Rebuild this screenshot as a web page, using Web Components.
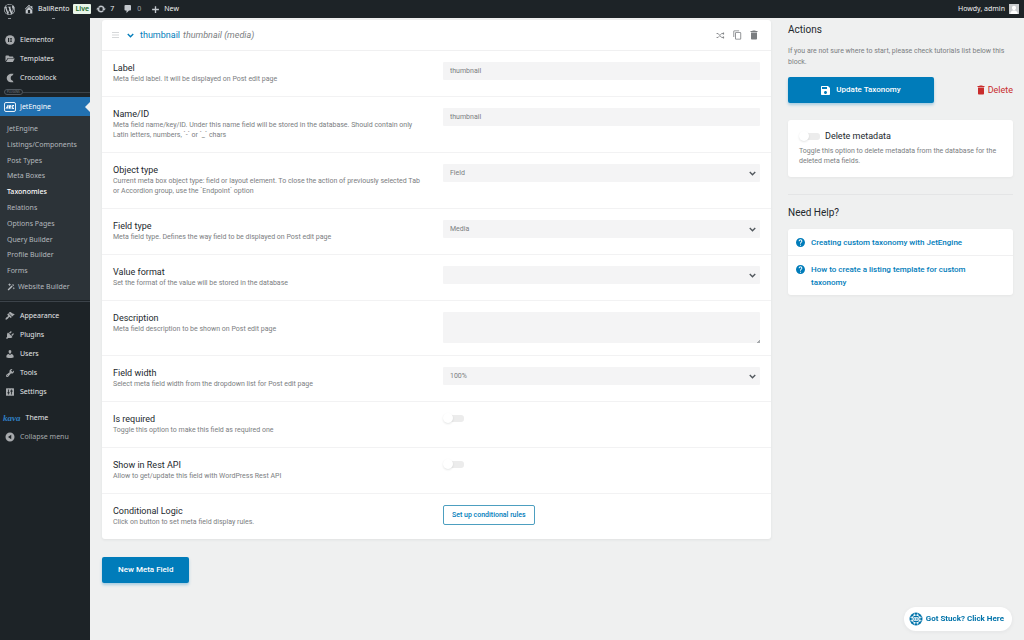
<!DOCTYPE html>
<html lang="en">
<head>
<meta charset="utf-8">
<title>Edit Taxonomy</title>
<style>
  body { margin: 0; background: #eff0f0; font-family: Roboto, "Liberation Sans", sans-serif; }
</style>
</head>
<body>
<taxonomy-page></taxonomy-page>
<script>
const ICONS = {
  wordpress: ['0 0 20 20', '<path d="M20 10c0-5.51-4.49-10-10-10C4.48 0 0 4.49 0 10c0 5.52 4.48 10 10 10 5.51 0 10-4.48 10-10zM7.78 15.37L4.37 6.22c.55-.02 1.17-.08 1.17-.08.5-.06.44-1.13-.06-1.11 0 0-1.45.11-2.37.11-.18 0-.37 0-.58-.01C4.12 2.69 6.87 1.11 10 1.11c2.33 0 4.45.87 6.05 2.34-.68-.11-1.65.39-1.65 1.58 0 .74.45 1.36.9 2.1.35.61.55 1.36.55 2.46 0 1.49-1.4 5-1.4 5l-3.03-8.37c.54-.02.82-.17.82-.17.5-.05.44-1.25-.06-1.22 0 0-1.44.12-2.38.12-.87 0-2.33-.12-2.33-.12-.5-.03-.56 1.2-.06 1.22l.92.08 1.26 3.41zM17.41 10c.24-.64.74-1.87.43-4.25.7 1.29 1.05 2.71 1.05 4.25 0 3.29-1.73 6.24-4.4 7.78.97-2.59 1.94-5.2 2.92-7.78zM6.1 18.09C3.12 16.65 1.11 13.53 1.11 10c0-1.3.23-2.48.72-3.59C3.25 10.3 4.67 14.2 6.1 18.09zm4.03-6.63l2.58 6.98c-.86.29-1.76.45-2.71.45-.79 0-1.57-.11-2.29-.33.81-2.38 1.62-4.74 2.42-7.1z"/>'],
  home: ['1 1 18 18', '<path d="M16 8.5l1.53 1.53-1.06 1.06L10 4.6l-6.47 6.49-1.06-1.06L10 2.5l4 4v-2h2v4zm-6-2.46l6 5.99V18H4v-5.97zM12 17v-5H8v5h4z"/>'],
  update: ['0 0 20 20', '<path stroke="currentColor" stroke-width=".5" d="M10.2 3.28c3.53 0 6.43 2.61 6.92 6h2.08l-3.5 4-3.5-4h2.32c-.45-1.97-2.21-3.45-4.32-3.45-1.45 0-2.73.71-3.54 1.78L4.95 5.66C6.23 4.2 8.11 3.28 10.2 3.28zm-.4 13.44c-3.52 0-6.43-2.61-6.92-6H.8l3.5-4c1.17 1.33 2.33 2.67 3.5 4H5.48c.45 1.97 2.21 3.45 4.32 3.45 1.45 0 2.73-.71 3.54-1.78l1.71 1.95c-1.28 1.46-3.15 2.38-5.25 2.38z"/>'],
  comment: ['1 0 18 20', '<path d="M5 2h9q.82 0 1.41.59T16 4v7q0 .82-.59 1.41T14 13h-2l-5 5v-5H5q-.82 0-1.41-.59T3 11V4q0-.82.59-1.41T5 2z"/>'],
  plus: ['0 0 20 20', '<path d="M8.5 2.500h3v6h6v3h-6v6h-3v-6h-6v-3h6z"/>'],
  elementor: ['0 0 20 20', '<circle cx="10" cy="10" r="9.6"/><path fill="#1d2327" d="M6 6h2v8H6zM9.4 6H14v1.700H9.400zM9.400 9.200H14v1.700H9.400zM9.400 12.300H14V14H9.400z"/>'],
  folder: ['0 0 20 20', '<path d="M1 4.5C1 3.7 1.5 3 2.4 3H7l2 2h6.5c.8 0 1.3.6 1.3 1.4V8H5.600L1 14.500z"/><path d="M6.300 9H19.500l-3.600 7H2z"/>'],
  croco: ['0 0 20 20', '<path d="M17 1.500C9 .2 3.500 4.200 3.500 10S9 19.800 17 18.500L15.500 15.500C12.500 14.500 11.500 12.500 11.500 10S12.500 5.500 15.500 4.500z"/>'],
  jet: ['0 0 24 20', '<rect x="1" y="1" width="22" height="18" rx="3" fill="none" stroke="currentColor" stroke-width="1.800"/><path fill="none" stroke="currentColor" stroke-width="2" d="M4 13.500L8 6.500V13.500M5.500 11.500H8M11 13.500V7H13.500V10H11L14 13.500M20 7H16.500V13H20M16.500 10H19"/>'],
  wand: ['0 0 20 20', '<path d="M1.500 16.500L11.500 6l2.800 2.800L4 19zM12.700 5l2.300-2.300 2.800 2.800-2.300 2.300zM6.500 0l1.200 3L11 4.200 7.700 5.400l-1.200 3-1.200-3L2 4.200 5.300 3zM17 10l.9 2.100L20 13l-2.100.9L17 16l-.9-2.100L14 13l2.100-.9z"/>'],
  appearance: ['0 0 20 20', '<path d="M14.48 11.06L7.41 3.99l1.500-1.500c.5-.56 2.300-.47 3.510.32 1.210.8 1.430 1.280 2.910 2.100 1.180.64 2.450 1.260 4.450.85zm-.71.71L6.700 4.700 4.930 6.470c-.39.39-.39 1.020 0 1.410l1.060 1.060c.39.39.39 1.030 0 1.420-.6.6-1.430 1.110-2.210 1.690-.35.26-.7.53-1.010.84C1.430 14.230.4 16.080 1.400 17.070c.99 1 2.840-.03 4.180-1.360.31-.31.58-.66.85-1.020.57-.78 1.080-1.610 1.690-2.210.39-.39 1.020-.39 1.410 0l1.060 1.060c.39.39 1.020.39 1.410 0z"/>'],
  plugins: ['0 0 20 20', '<path d="M13.11 4.36L9.87 7.6 8 5.73l3.24-3.24c.35-.34 1.05-.2 1.56.32.52.51.66 1.21.31 1.55zm-8 1.77l.91-1.12 9.01 9.01-1.19.84c-.71.71-2.63 1.16-3.82 1.16H6.14L4.9 17.26c-.59.59-1.54.59-2.12 0-.59-.58-.59-1.53 0-2.12l1.24-1.24v-3.88c0-1.13.4-3.19 1.09-3.89zm7.26 3.97l3.24-3.24c.34-.35 1.04-.21 1.55.31.52.51.66 1.21.31 1.55l-3.24 3.25z"/>'],
  users: ['0 0 20 20', '<path d="M10 9.25c-2.27 0-2.73-3.44-2.73-3.44C7 4.02 7.82 2 9.97 2c2.16 0 2.98 2.02 2.71 3.81 0 0-.41 3.44-2.68 3.44zm0 2.57L12.72 10c2.39 0 4.52 2.33 4.52 4.53v2.49s-3.65 1.13-7.24 1.13c-3.65 0-7.24-1.13-7.24-1.13v-2.49c0-2.25 1.94-4.48 4.47-4.48z"/>'],
  tools: ['0 0 20 20', '<path d="M16.68 9.77c-1.34 1.34-3.3 1.67-4.95.99l-5.41 6.52c-.99.99-2.59.99-3.58 0s-.99-2.59 0-3.57l6.52-5.42c-.68-1.65-.35-3.61.99-4.95 1.28-1.28 3.12-1.62 4.72-1.06l-2.89 2.89 2.82 2.82 2.86-2.87c.53 1.58.18 3.39-1.08 4.65zM3.81 16.21c.4.39 1.04.39 1.43 0 .4-.4.4-1.04 0-1.43-.39-.4-1.03-.4-1.43 0-.39.39-.39 1.03 0 1.43z"/>'],
  settings: ['0 0 20 20', '<path fill-rule="evenodd" d="M3 2.500h14a1 1 0 0 1 1 1v13a1 1 0 0 1-1 1H3a1 1 0 0 1-1-1v-13a1 1 0 0 1 1-1zM6.200 5v5.500H4.800v2.200h1.400V15h1.600v-2.300h1.400v-2.200H7.800V5zM12.200 5v2.200h-1.400v2.200h1.400V15h1.600V9.400h1.400V7.200h-1.400V5z"/>'],
  collapse: ['0 0 20 20', '<path fill-rule="evenodd" d="M10 1a9 9 0 1 0 0 18 9 9 0 0 0 0-18zm2.500 13.500L6 10l6.500-4.500z"/>'],
  drag: ['0 0 14 12', '<path d="M0 0h14v2H0zM0 5h14v2H0zM0 10h14v2H0z"/>'],
  chevron: ['0 0 12 8', '<path fill="none" stroke="currentColor" stroke-width="2.400" d="M1.300 1.500L6 6l4.700-4.500"/>'],
  shuffle: ['0 0 20 16', '<path fill="none" stroke="currentColor" stroke-width="2" d="M1 3.500h3.500l8 9H18M1 12.500h3.500l2.800-3M9.800 6.500l2.700-3H18M15.500 1l2.700 2.500-2.700 2.500M15.500 10l2.700 2.500-2.700 2.500"/>'],
  copy: ['1 0 22 24', '<path d="M16 1H4c-1.1 0-2 .9-2 2v14h2V3h12V1zm3 4H8c-1.1 0-2 .9-2 2v14c0 1.1.9 2 2 2h11c1.1 0 2-.9 2-2V7c0-1.1-.9-2-2-2zm0 16H8V7h11v14z"/>'],
  trash: ['4 2 16 20', '<path d="M6 19c0 1.1.9 2 2 2h8c1.1 0 2-.9 2-2V7H6v12zM19 4h-3.5l-1-1h-5l-1 1H5v2h14V4z"/>'],
  save: ['3 3 18 18', '<path d="M17 3H5c-1.11 0-2 .9-2 2v14c0 1.1.89 2 2 2h14c1.1 0 2-.9 2-2V7l-4-4zm-5 16c-1.66 0-3-1.34-3-3s1.34-3 3-3 3 1.34 3 3-1.34 3-3 3zm3-10H5V5h10v4z"/>'],
  help: ['2 2 20 20', '<path d="M12 2C6.48 2 2 6.48 2 12s4.48 10 10 10 10-4.48 10-10S17.52 2 12 2zm1 17h-2v-2h2v2zm2.07-7.75l-.9.92C13.45 12.9 13 13.5 13 15h-2v-.5c0-1.1.45-2.1 1.17-2.83l1.24-1.26c.37-.36.59-.86.59-1.41 0-1.1-.9-2-2-2s-2 .9-2 2H8c0-2.21 1.79-4 4-4s4 1.79 4 4c0 .88-.36 1.68-.93 2.25z"/>'],
  lifebuoy: ['0 0 28 28', '<circle cx="14" cy="14" r="13"/><path stroke="#fff" stroke-width="2" fill="none" d="M10.500 3V8M17.500 3V8M10.500 20v5M17.500 20v5M3 10.500H8M3 17.500H8M20 10.500h5M20 17.500h5"/><circle cx="14" cy="14" r="8" fill="none" stroke="#fff" stroke-width="1.500"/><rect x="8.500" y="10.500" width="11" height="7" rx="1.500" fill="#fff"/><path d="M10.500 12.500h2v3h-2zM14 12.500h1.500v3H14zM17 12.500h1v3h-1z"/>'],
  avatar: ['0 0 20 20', '<path fill="#c9cccf" d="M0 0h20v20H0z"/><path fill="#fff" d="M10 3.500c2.600 0 4 1.800 4 4.200s-1.600 4.800-4 4.800-4-2.400-4-4.800S7.400 3.500 10 3.500zM2.500 20c0-4 2.500-6.500 5-7.200h5c2.500.7 5 3.200 5 7.200z"/>'],
};

class BaseElement extends HTMLElement {
  connectedCallback() {
    if (this.shadowRoot) return;
    this.attachShadow({ mode: 'open' }).innerHTML =
      `<style>*{box-sizing:border-box}${this.styles()}</style>${this.markup()}`;
  }
}

/* <ui-icon name w h> : an inline glyph in the current text colour */
customElements.define('ui-icon', class extends BaseElement {
  styles() {
    return `:host{display:block;flex:none;width:${this.getAttribute('w') || 10}px;height:${this.getAttribute('h') || this.getAttribute('w') || 10}px}
      svg{display:block;width:100%;height:100%;fill:currentColor}`;
  }
  markup() {
    const [box, body] = ICONS[this.getAttribute('name')];
    return `<svg viewBox="${box}" aria-hidden="true">${body}</svg>`;
  }
});

customElements.define('admin-bar', class extends BaseElement {
  styles() { return `
    :host{display:flex;justify-content:space-between;height:18px;padding:0 5px 0 4px;background:#1d2327;color:#f0f0f1;font:7px/18px "Noto Sans","Open Sans",sans-serif}
    nav{display:flex;align-items:center}
    a{display:flex;align-items:center;gap:4px;color:inherit;text-decoration:none}
    ui-icon{color:#c3c8cd}
    .site{margin-left:9px}
    .live{margin-left:4px;padding:0 2px;border-radius:1px;background:#e9f5e9;color:#1c6b2c;font-weight:600;line-height:10px}
    .upd{margin-left:5px}.com{margin-left:9px}.new{margin-left:10px}
    .dim{color:#a0a5aa}`; }
  markup() { return `
    <nav aria-label="Toolbar">
      <a href="#" aria-label="WordPress"><ui-icon name="wordpress" w="11"></ui-icon></a>
      <a href="#" class="site"><ui-icon name="home" w="10"></ui-icon>BaliRento</a>
      <a href="#" class="live">Live</a>
      <a href="#" class="upd"><ui-icon name="update" w="10"></ui-icon>7</a>
      <a href="#" class="com dim"><ui-icon name="comment" w="10"></ui-icon>0</a>
      <a href="#" class="new"><ui-icon name="plus" w="9"></ui-icon>New</a>
    </nav>
    <a href="#">Howdy, admin<ui-icon name="avatar" w="10"></ui-icon></a>`; }
});

customElements.define('menu-item', class extends BaseElement {
  styles() { return `
    :host{display:block}
    a{position:relative;display:flex;align-items:center;gap:5px;height:19px;padding-left:5px;color:#e4e6e8;text-decoration:none}
    ui-icon{color:#a7aaad}
    :host([current]) a{background:#2271b1;color:#fff;padding-left:4px;gap:4px}
    :host([current]) ui-icon{color:#fff}
    :host([current]) a::after{content:"";position:absolute;right:0;top:5px;border:5px solid transparent;border-left:0;border-right-color:#eff0f0}
    :host([muted]) a{color:#a7aaad}`; }
  markup() {
    const cur = this.hasAttribute('current');
    return `<a href="#"${cur ? ' aria-current="true"' : ''}><ui-icon name="${this.getAttribute('icon')}" w="${cur ? 12 : 10}" h="10"></ui-icon><slot></slot></a>`;
  }
});

customElements.define('admin-menu', class extends BaseElement {
  styles() { return `
    :host{display:block;flex:none;width:90px;background:#1d2327;color:#e4e6e8;font:7px/10px "Noto Sans","Open Sans",sans-serif}
    nav{display:flex;flex-direction:column}
    .scrolled{display:flex;justify-content:space-between;width:47px;height:1px;margin:0 0 11px 8px}
    .scrolled::before,.scrolled::after{content:"";width:3px;background:#8d9196}
    .group{display:flex;align-items:center;height:10px}
    .group span{margin-left:4px;padding:0 2px;border:1px solid #50575e;border-radius:3px;color:#787c82;font-size:3px;line-height:4px}
    .group::after{content:"";flex:1;height:1px;background:#3c434a}
    ul{display:flex;flex-direction:column;height:184px;margin:0;padding:5px 0;list-style:none;background:#2c3338}
    li{display:flex;flex:1;align-items:center}
    li a{display:flex;align-items:center;gap:3px;padding-left:7px;color:#b4b9be;text-decoration:none}
    li a[aria-current]{color:#fff;font-weight:500}
    hr{width:100%;height:1px;margin:1px 0 4px;border:0;background:#3c434a}
    .kava{display:flex;align-items:center;height:19px;margin-top:7px;padding-left:3px;gap:5px;color:#e4e6e8;text-decoration:none}
    .kava i{color:#2f7fc4;font:italic 700 9px/10px "Liberation Serif",serif}`; }
  markup() {
    const sub = ['JetEngine','Listings/Components','Post Types','Meta Boxes','Taxonomies','Relations','Options Pages','Query Builder','Profile Builder','Forms'];
    return `<nav aria-label="Main menu">
      <div class="scrolled"></div>
      <menu-item icon="elementor">Elementor</menu-item>
      <menu-item icon="folder">Templates</menu-item>
      <menu-item icon="croco">Crocoblock</menu-item>
      <div class="group"><span>PLUGINS</span></div>
      <menu-item icon="jet" current>JetEngine</menu-item>
      <ul>${sub.map(s => `<li><a href="#"${s === 'Taxonomies' ? ' aria-current="page"' : ''}>${s}</a></li>`).join('')}
        <li><a href="#"><ui-icon name="wand" w="8"></ui-icon>Website Builder</a></li></ul>
      <hr>
      <menu-item icon="appearance">Appearance</menu-item>
      <menu-item icon="plugins">Plugins</menu-item>
      <menu-item icon="users">Users</menu-item>
      <menu-item icon="tools">Tools</menu-item>
      <menu-item icon="settings">Settings</menu-item>
      <a class="kava" href="#"><i>kava</i>Theme</a>
      <menu-item icon="collapse" muted>Collapse menu</menu-item>
    </nav>`;
  }
});

const SWITCH = `
  .switch{appearance:none;display:block;position:relative;flex:none;width:21px;height:10px;margin:0}
  .switch::before{content:"";position:absolute;left:5px;right:0;top:2px;height:7px;border-radius:3px;background:#ececec}
  .switch::after{content:"";position:absolute;left:0;top:0;width:10px;height:10px;border-radius:50%;background:#fff;box-shadow:0 1px 2px rgba(35,40,45,.12)}`;

/* One settings row: a label and a hint on the left, its control on the right */
customElements.define('meta-field', class extends BaseElement {
  styles() { return `
    :host{display:grid;grid-template-columns:51fr 49fr;padding:11px 11px 12px;border-bottom:1px solid #f2f2f3}
    :host(:last-of-type){border-bottom:0}
    .text{padding-right:16px}
    label,.name{display:block;color:#23282d;font-size:9px;line-height:12px}
    p{margin:0;color:#7b7e81;font-size:7px;line-height:10px}
    input[type=text],select,textarea{display:block;width:100%;height:18px;margin:0;padding:0 7px;border:0;border-radius:1px;background:#f4f4f5;color:#7b7e81;font:7px/18px Roboto,sans-serif}
    select{appearance:none;padding-right:20px}
    textarea{height:31px;resize:vertical}
    textarea::-webkit-resizer{background:linear-gradient(135deg,transparent 90%,#a7aaad 90%)}
    .pick{position:relative}
    .pick ui-icon{position:absolute;right:4px;top:7px;color:#50565c;pointer-events:none}
    button{display:block;height:20px;padding:0 8px;border:1px solid #4d9fc0;border-radius:2px;background:#fff;color:#007cba;font:500 7px/18px Roboto,sans-serif}
    ${SWITCH}`; }
  markup() {
    const type = this.getAttribute('type'), v = this.getAttribute('value') || '', l = this.getAttribute('label');
    const control = {
      text: `<input id="c" type="text" value="${v}">`,
      select: `<div class="pick"><select id="c"><option>${v}</option></select><ui-icon name="chevron" w="7" h="5"></ui-icon></div>`,
      textarea: `<textarea id="c"></textarea>`,
      toggle: `<input id="c" class="switch" type="checkbox" role="switch">`,
      button: `<button type="button">${v}</button>`,
    }[type];
    const name = type === 'button' ? `<div class="name">${l}</div>` : `<label for="c">${l}</label>`;
    return `<div class="text">${name}<p><slot></slot></p></div><div>${control}</div>`;
  }
});

customElements.define('field-card', class extends BaseElement {
  styles() { return `
    :host{display:block;border-radius:3px;background:#fff;box-shadow:0 1px 3px rgba(35,40,45,.07)}
    header{display:flex;align-items:center;height:31px;padding:0 13px 0 10px;border-bottom:1px solid #f0f0f1;font-size:9px;line-height:12px}
    .drag{color:#d5d7d9}
    button{display:block;padding:0;border:0;background:none;color:#7b7e81}
    .toggle{display:flex;align-items:center;gap:6px;margin-left:8px;color:#007cba;font:9px/12px Roboto,sans-serif}
    em{flex:1;margin-left:3px;color:#7b7e81}
    .tools{display:flex;align-items:center;gap:8px}`; }
  markup() { return `
    <header>
      <ui-icon class="drag" name="drag" w="7" h="6"></ui-icon>
      <button class="toggle" type="button" aria-expanded="true"><ui-icon name="chevron" w="7" h="5"></ui-icon>thumbnail</button>
      <em>thumbnail (media)</em>
      <div class="tools">
        <button type="button" aria-label="Randomize name"><ui-icon name="shuffle" w="9" h="7"></ui-icon></button>
        <button type="button" aria-label="Copy field"><ui-icon name="copy" w="9" h="10"></ui-icon></button>
        <button type="button" aria-label="Delete field"><ui-icon name="trash" w="8" h="10"></ui-icon></button>
      </div>
    </header>
    <slot></slot>`; }
});

customElements.define('primary-button', class extends BaseElement {
  styles() { return `
    :host{display:inline-block}
    button{display:flex;align-items:center;justify-content:center;gap:6px;width:100%;height:26px;padding:0 16px;border:0;border-radius:2px;background:#007cba;color:#fff;font:500 8px/12px Roboto,sans-serif;box-shadow:0 2px 3px rgba(0,124,186,.3)}`; }
  markup() { return `<button type="button"><slot></slot></button>`; }
});

customElements.define('actions-panel', class extends BaseElement {
  styles() { return `
    :host{display:block;flex:none;width:225px;padding-top:6px;color:#23282d}
    h2{margin:0;font-size:10px;font-weight:400;line-height:12px}
    .intro{margin:10px 0 9px;color:#7b7e81;font-size:7px;line-height:11px}
    .row{display:flex;align-items:center;justify-content:space-between}
    primary-button{width:146px}
    .delete{display:flex;align-items:center;gap:3px;color:#c92c2c;font-size:9px;line-height:12px;text-decoration:none}
    .card{border-radius:3px;background:#fff;box-shadow:0 1px 3px rgba(35,40,45,.05)}
    .meta{margin:17px 0;padding:11px}
    .meta label{display:flex;align-items:center;gap:5px;height:10px;font-size:9px;line-height:10px}
    .meta p{margin:5px 0 0;color:#7b7e81;font-size:7px;line-height:10px}
    hr{height:1px;margin:0 0 12px;border:0;background:#e4e5e6}
    .links{margin:10px 0 0;padding:0;list-style:none}
    li+li{border-top:1px solid #f0f0f1}
    li a{display:flex;gap:6px;padding:7px 32px 6px 8px;color:#007cba;font-size:8px;font-weight:500;line-height:13px;text-decoration:none}
    li ui-icon{margin-top:2px}
    ${SWITCH}`; }
  markup() { return `
    <h2>Actions</h2>
    <p class="intro">If you are not sure where to start, please check tutorials list below this block.</p>
    <div class="row">
      <primary-button><ui-icon name="save" w="9"></ui-icon>Update Taxonomy</primary-button>
      <a class="delete" href="#"><ui-icon name="trash" w="8" h="10"></ui-icon>Delete</a>
    </div>
    <div class="card meta">
      <label><input class="switch" type="checkbox" role="switch">Delete metadata</label>
      <p>Toggle this option to delete metadata from the database for the deleted meta fields.</p>
    </div>
    <hr>
    <h2>Need Help?</h2>
    <ul class="card links">
      <li><a href="#"><ui-icon name="help" w="9"></ui-icon>Creating custom taxonomy with JetEngine</a></li>
      <li><a href="#"><ui-icon name="help" w="9"></ui-icon>How to create a listing template for custom taxonomy</a></li>
    </ul>`; }
});

customElements.define('help-badge', class extends BaseElement {
  styles() { return `
    :host{position:fixed;right:12px;bottom:9px}
    a{display:flex;align-items:center;gap:3px;height:24px;padding:0 8px 0 5px;border-radius:12px;background:#fff;color:#0073aa;font:700 8px/12px Roboto,sans-serif;text-decoration:none;box-shadow:0 1px 4px rgba(35,40,45,.06)}`; }
  markup() { return `<a href="#"><ui-icon name="lifebuoy" w="14"></ui-icon>Got Stuck? Click Here</a>`; }
});

customElements.define('taxonomy-page', class extends BaseElement {
  styles() { return `
    :host{display:flex;flex-direction:column;min-height:100vh}
    .body{display:flex;flex:1}
    main{display:flex;flex:1;gap:17px;min-width:0;padding:0 11px 0 12px}
    .fields{flex:1;min-width:0;padding:2px 0 18px}
    .add{margin-top:18px}`; }
  markup() { return `
    <admin-bar></admin-bar>
    <div class="body">
      <admin-menu></admin-menu>
      <main>
        <div class="fields">
          <field-card>
            <meta-field type="text" label="Label" value="thumbnail">Meta field label. It will be displayed on Post edit page</meta-field>
            <meta-field type="text" label="Name/ID" value="thumbnail">Meta field name/key/ID. Under this name field will be stored in the database. Should contain only Latin letters, numbers, \`-\` or \`_\` chars</meta-field>
            <meta-field type="select" label="Object type" value="Field">Current meta box object type: field or layout element. To close the action of previously selected Tab or Accordion group, use the \`Endpoint\` option</meta-field>
            <meta-field type="select" label="Field type" value="Media">Meta field type. Defines the way field to be displayed on Post edit page</meta-field>
            <meta-field type="select" label="Value format">Set the format of the value will be stored in the database</meta-field>
            <meta-field type="textarea" label="Description">Meta field description to be shown on Post edit page</meta-field>
            <meta-field type="select" label="Field width" value="100%">Select meta field width from the dropdown list for Post edit page</meta-field>
            <meta-field type="toggle" label="Is required">Toggle this option to make this field as required one</meta-field>
            <meta-field type="toggle" label="Show in Rest API">Allow to get/update this field with WordPress Rest API</meta-field>
            <meta-field type="button" label="Conditional Logic" value="Set up conditional rules">Click on button to set meta field display rules.</meta-field>
          </field-card>
          <primary-button class="add">New Meta Field</primary-button>
        </div>
        <actions-panel></actions-panel>
      </main>
    </div>
    <help-badge></help-badge>`; }
});
</script>
</body>
</html>
